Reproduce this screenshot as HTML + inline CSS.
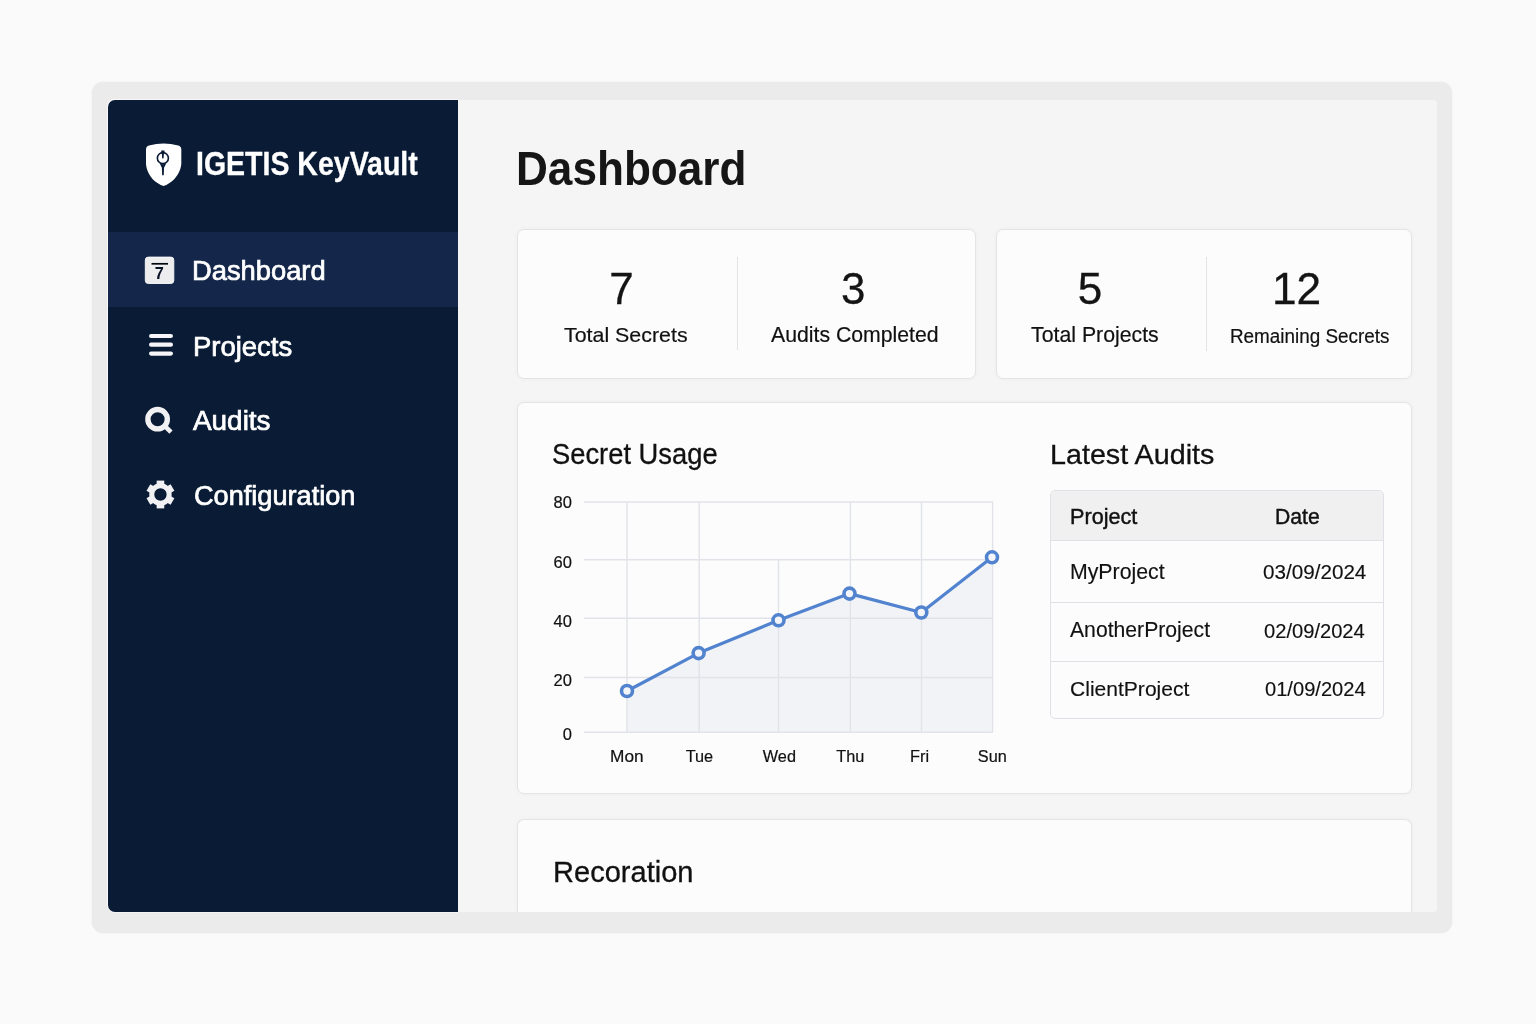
<!DOCTYPE html>
<html lang="en">
<head>
<meta charset="utf-8">
<title>IGETIS KeyVault - Dashboard</title>
<style>
html,body{margin:0;padding:0}
body{width:1536px;height:1024px;background:#fafafa;position:relative;overflow:hidden;font-family:"Liberation Sans",Arial,sans-serif;will-change:transform}
*{box-sizing:border-box}
.abs,.t,svg{position:absolute}
.t{line-height:0;white-space:nowrap;margin:0;padding:0;font-weight:400;transform-origin:0 50%}
.frame{left:92px;top:81.5px;width:1360px;height:851.5px;background:#ebebeb;border-radius:11px;box-shadow:0 0 2px #ebebeb}
.sidebar{left:108px;top:100px;width:350px;height:812px;background:#0a1b35;border-radius:7px 0 0 7px;box-shadow:-1px 0 0 #f8f8f8,0 -1px 0 #f8f8f8,-1px -1px 0 #f8f8f8,0 1px 0 #f4f4f4}
.active{left:108px;top:232px;width:350px;height:75px;background:#14274a}
.main{left:458px;top:100px;width:979px;height:812px;background:#f5f5f5;border-radius:0 3px 3px 0}
.card{background:#fcfcfc;border:1.5px solid #e4e4e4;border-radius:7px;box-shadow:0 0 5px rgba(0,0,0,.035)}
.vdiv{width:1px;background:#e3e3e6}
</style>
</head>
<body>
<div class="abs frame"></div>

<aside>
<div class="abs sidebar"></div>
<div class="abs active"></div>
<header>
<svg style="left:144px;top:141.5px" width="40" height="46" viewBox="512 572 320 368">
<path d="M552 600 Q668 568 786 600 Q810 607 810.5 632 L810.5 746 C808 800 770 870 713 901 Q690 916 668 924 Q646 916 623 901 C566 870 530 800 528 746 L528 632 Q528 607 552 600 Z" fill="#ffffff"/>
<circle cx="663" cy="701" r="44" fill="none" stroke="#0a1b35" stroke-width="13"/>
<path d="M650 640 H676 V664 L671 668 L669 700 Q663 709 657 700 L655 668 L650 664 Z" fill="#0a1b35"/>
<path d="M638 744 Q663 756 690 744 L672 778 L670 838 H657 L655 778 Z" fill="#0a1b35"/>
</svg>
<div class="t" style="left:195.78px;top:163.57px;font-size:33px;color:#fff;font-weight:700;-webkit-text-stroke:0.3px #fff;transform:scaleX(0.8638);">IGETIS KeyVault</div>
</header>
<nav>
<div class="item current">
<svg style="left:144px;top:256px" width="32" height="29" viewBox="144 256 32 29">
<rect x="145.3" y="257.1" width="28.5" height="26.4" rx="3" fill="#ededf0" stroke="#fbfbfc" stroke-width="0.9"/>
<path d="M151.5 263.8 H168" stroke="#03060f" stroke-width="1.7"/>
<text x="159.2" y="278.9" font-family="Liberation Sans, sans-serif" font-size="16.3" font-weight="700" text-anchor="middle" fill="#0a1226">7</text>
</svg>
<span class="t" style="left:191.65px;top:270.84px;font-size:27px;color:#fff;-webkit-text-stroke:0.7px #fff;transform:scaleX(1.0116);">Dashboard</span>
</div>
<div class="item">
<svg style="left:146px;top:331px" width="30" height="28" viewBox="146 331 30 28">
<g stroke="#f6f6f8" stroke-width="4.2" stroke-linecap="round"><path d="M151.1 336 H170.9"/><path d="M151.1 344.7 H170.9"/><path d="M151.1 353.6 H170.9"/></g>
</svg>
<span class="t" style="left:193.33px;top:347.44px;font-size:27px;color:#fff;-webkit-text-stroke:0.7px #fff;transform:scaleX(1.0173);">Projects</span>
</div>
<div class="item">
<svg style="left:143px;top:404px" width="32" height="32" viewBox="143 404 32 32">
<circle cx="157.6" cy="419.2" r="9.7" fill="none" stroke="#f1f1f3" stroke-width="5.4"/>
<path d="M164.6 425.9 L171 432.1" stroke="#f1f1f3" stroke-width="4.6" stroke-linecap="butt"/>
</svg>
<span class="t" style="left:193.43px;top:421.34px;font-size:27px;color:#fff;-webkit-text-stroke:0.7px #fff;transform:scaleX(1.0331);">Audits</span>
</div>
<div class="item">
<svg style="left:144px;top:478px" width="33" height="33" viewBox="144 478 33 33">
<circle cx="160.45" cy="494.5" r="8.7" fill="none" stroke="#f1f1f3" stroke-width="5"/>
<g stroke="#f1f1f3" stroke-width="7.6" stroke-linecap="butt" stroke-linejoin="round"><path d="M160.45 480.6 V486" transform="rotate(0 160.45 494.5)"/><path d="M160.45 480.6 V486" transform="rotate(60 160.45 494.5)"/><path d="M160.45 480.6 V486" transform="rotate(120 160.45 494.5)"/><path d="M160.45 480.6 V486" transform="rotate(180 160.45 494.5)"/><path d="M160.45 480.6 V486" transform="rotate(240 160.45 494.5)"/><path d="M160.45 480.6 V486" transform="rotate(300 160.45 494.5)"/></g>
</svg>
<span class="t" style="left:193.94px;top:495.64px;font-size:27px;color:#fff;-webkit-text-stroke:0.7px #fff;transform:scaleX(1.0052);">Configuration</span>
</div>
</nav>
</aside>
<main>
<div class="abs main"></div>
<h1 class="t" style="left:516.22px;top:169.44px;font-size:47.8px;color:#161616;font-weight:700;transform:scaleX(0.9231);">Dashboard</h1>
<section class="stats">
<div class="abs card" style="left:517px;top:229.2px;width:459px;height:149.8px"></div>
<div class="abs vdiv" style="left:736.5px;top:257px;height:93px"></div>
<span class="t" style="left:609.24px;top:288.95px;font-size:44px;color:#141414;-webkit-text-stroke:0.3px #141414;">7</span>
<span class="t" style="left:563.82px;top:335.49px;font-size:21.1px;color:#111;-webkit-text-stroke:0.2px #111;transform:scaleX(1.0137);">Total Secrets</span>
<span class="t" style="left:840.90px;top:288.95px;font-size:44px;color:#141414;-webkit-text-stroke:0.3px #141414;">3</span>
<span class="t" style="left:770.95px;top:335.12px;font-size:21.3px;color:#111;-webkit-text-stroke:0.2px #111;transform:scaleX(0.9968);">Audits Completed</span>
</section>
<section class="stats">
<div class="abs card" style="left:995.5px;top:229.2px;width:416.5px;height:149.8px"></div>
<div class="abs vdiv" style="left:1205.5px;top:257px;height:94px"></div>
<span class="t" style="left:1077.79px;top:288.95px;font-size:44px;color:#141414;-webkit-text-stroke:0.3px #141414;">5</span>
<span class="t" style="left:1031.32px;top:335.08px;font-size:21.4px;color:#111;-webkit-text-stroke:0.2px #111;transform:scaleX(0.9951);">Total Projects</span>
<span class="t" style="left:1272.48px;top:288.95px;font-size:44px;color:#141414;-webkit-text-stroke:0.3px #141414;transform:scaleX(1.006);">12</span>
<span class="t" style="left:1229.94px;top:335.81px;font-size:19.6px;color:#111;-webkit-text-stroke:0.2px #111;transform:scaleX(0.9628);">Remaining Secrets</span>
</section>
<section class="panel">
<div class="abs card" style="left:517px;top:401.7px;width:895px;height:392.3px"></div>
<div class="chart">
<h2 class="t" style="left:551.67px;top:454.28px;font-size:29.2px;color:#111;-webkit-text-stroke:0.3px #111;transform:scaleX(0.9368);">Secret Usage</h2>
<svg style="left:517px;top:403px" width="895" height="390" viewBox="517 403 895 390">
<path d="M627 691 L698.6 653.1 L778.5 620.3 L849.5 593.6 L921.3 612.5 L992 557.3 L992 732.2 L627 732.2 Z" fill="#f2f3f7"/>
<g stroke="#e1e3e9" stroke-width="1.4" fill="none">
<path d="M584 502 H993"/>
<path d="M584 559.7 H993"/>
<path d="M584 618.2 H993"/>
<path d="M584 677.5 H993"/>
<path d="M584 732.2 H993"/>
<path d="M627 502 V732.2"/>
<path d="M699.2 502 V732.2"/>
<path d="M778.5 559.7 V732.2"/>
<path d="M850.4 502 V732.2"/>
<path d="M921.5 502 V732.2"/>
<path d="M992.6 502 V732.2"/>
</g>
<path d="M627 691 L698.6 653.1 L778.5 620.3 L849.5 593.6 L921.3 612.5 L992 557.3" fill="none" stroke="#5283cf" stroke-width="3.2" stroke-linejoin="round"/>
<circle cx="627" cy="691" r="5.5" fill="#f3f5fa" stroke="#5283cf" stroke-width="3.6"/>
<circle cx="698.6" cy="653.1" r="5.5" fill="#f3f5fa" stroke="#5283cf" stroke-width="3.6"/>
<circle cx="778.5" cy="620.3" r="5.5" fill="#f3f5fa" stroke="#5283cf" stroke-width="3.6"/>
<circle cx="849.5" cy="593.6" r="5.5" fill="#f3f5fa" stroke="#5283cf" stroke-width="3.6"/>
<circle cx="921.3" cy="612.5" r="5.5" fill="#f3f5fa" stroke="#5283cf" stroke-width="3.6"/>
<circle cx="992" cy="557.3" r="5.5" fill="#f3f5fa" stroke="#5283cf" stroke-width="3.6"/>
</svg>
<span class="t" style="left:553.50px;top:502.48px;font-size:16.5px;color:#111;-webkit-text-stroke:0.2px #111;">80</span>
<span class="t" style="left:553.50px;top:561.78px;font-size:16.5px;color:#111;-webkit-text-stroke:0.2px #111;">60</span>
<span class="t" style="left:553.50px;top:620.78px;font-size:16.5px;color:#111;-webkit-text-stroke:0.2px #111;">40</span>
<span class="t" style="left:553.50px;top:680.28px;font-size:16.5px;color:#111;-webkit-text-stroke:0.2px #111;">20</span>
<span class="t" style="left:562.66px;top:734.18px;font-size:16.5px;color:#111;-webkit-text-stroke:0.2px #111;">0</span>
<span class="t" style="left:610.15px;top:756.15px;font-size:16.3px;color:#111;-webkit-text-stroke:0.2px #111;transform:scaleX(1.06);">Mon</span>
<span class="t" style="left:685.63px;top:756.15px;font-size:16.3px;color:#111;-webkit-text-stroke:0.2px #111;">Tue</span>
<span class="t" style="left:762.76px;top:756.15px;font-size:16.3px;color:#111;-webkit-text-stroke:0.2px #111;">Wed</span>
<span class="t" style="left:836.31px;top:756.15px;font-size:16.3px;color:#111;-webkit-text-stroke:0.2px #111;">Thu</span>
<span class="t" style="left:910.06px;top:756.15px;font-size:16.3px;color:#111;-webkit-text-stroke:0.2px #111;">Fri</span>
<span class="t" style="left:977.78px;top:756.15px;font-size:16.3px;color:#111;-webkit-text-stroke:0.2px #111;">Sun</span>
</div>
<div class="audits">
<h2 class="t" style="left:1049.83px;top:455.40px;font-size:28.0px;color:#111;-webkit-text-stroke:0.3px #111;transform:scaleX(1.025);">Latest Audits</h2>
<div class="abs" style="left:1050px;top:490px;width:334px;height:229.3px;border:1.4px solid #dfe1e7;border-radius:5px;background:#fcfcfc;overflow:hidden"><div class="abs" style="left:0;top:0;width:334px;height:50.4px;background:#f0f0f0;border-bottom:1.2px solid #dfe1e7"></div><div class="abs" style="left:0;top:110.6px;width:334px;height:1.2px;background:#dfe1e7"></div><div class="abs" style="left:0;top:170px;width:334px;height:1.2px;background:#dfe1e7"></div></div>
<span class="t" style="left:1069.71px;top:517.08px;font-size:22px;color:#111;-webkit-text-stroke:0.45px #111;transform:scaleX(0.9835);">Project</span>
<span class="t" style="left:1274.55px;top:517.08px;font-size:22px;color:#111;-webkit-text-stroke:0.45px #111;transform:scaleX(0.9618);">Date</span>
<span class="t" style="left:1069.54px;top:571.95px;font-size:21.8px;color:#111;-webkit-text-stroke:0.15px #111;transform:scaleX(0.9764);">MyProject</span>
<span class="t" style="left:1262.67px;top:572.26px;font-size:20.9px;color:#111;-webkit-text-stroke:0.15px #111;transform:scaleX(0.9884);">03/09/2024</span>
<span class="t" style="left:1069.85px;top:630.28px;font-size:21.7px;color:#111;-webkit-text-stroke:0.15px #111;transform:scaleX(0.9761);">AnotherProject</span>
<span class="t" style="left:1264.09px;top:630.70px;font-size:20.5px;color:#111;-webkit-text-stroke:0.15px #111;transform:scaleX(0.982);">02/09/2024</span>
<span class="t" style="left:1069.55px;top:689.46px;font-size:20.6px;color:#111;-webkit-text-stroke:0.15px #111;transform:scaleX(1.0223);">ClientProject</span>
<span class="t" style="left:1265.30px;top:689.39px;font-size:20.8px;color:#111;-webkit-text-stroke:0.15px #111;transform:scaleX(0.9669);">01/09/2024</span>
</div>
</section>
<section class="panel">
<div class="abs card" style="left:517px;top:819px;width:895px;height:93px;border-bottom:0;border-radius:7px 7px 0 0;clip-path:inset(-10px -10px 0 -10px)"></div>
<h2 class="t" style="left:552.90px;top:871.52px;font-size:28.8px;color:#111;-webkit-text-stroke:0.3px #111;transform:scaleX(1.0089);">Recoration</h2>
</section>
</main>
</body>
</html>
